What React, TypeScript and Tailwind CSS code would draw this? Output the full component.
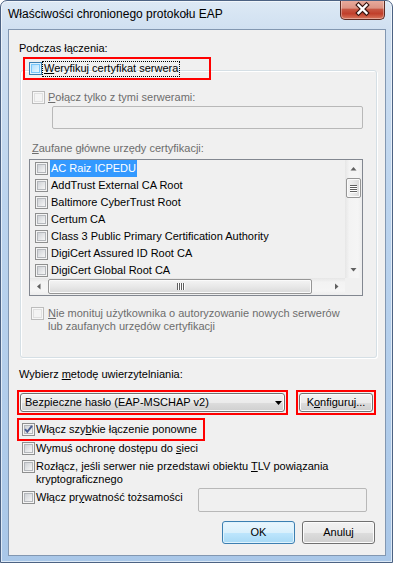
import React from 'react';

type Kind = 'normal' | 'hot' | 'disabled';

function Box({ kind = 'normal', checked = false }: { kind?: Kind; checked?: boolean }) {
  if (kind === 'disabled') {
    return (
      <span className="flex h-[13px] w-[13px] shrink-0 border border-[#bcbcbc] bg-[#f7f7f7] p-[1px]">
        <span className="h-full w-full border border-[#e0e0e0] bg-[#f4f4f4]" />
      </span>
    );
  }
  if (kind === 'hot') {
    return (
      <span className="flex h-[13px] w-[13px] shrink-0 border border-[#3c7fb1] bg-[#dff2fd] p-[1px]">
        <span className="h-full w-full border border-[#79c6f9] bg-[linear-gradient(135deg,#b1dffd,#e9f7fe)]" />
      </span>
    );
  }
  return (
    <span className="relative flex h-[13px] w-[13px] shrink-0 border border-[#8e8f8f] bg-[#f4f4f4] p-[1px]">
      <span className="h-full w-full border border-[#b4b7bb] bg-[linear-gradient(135deg,#cfd2d6,#f6f6f6)]" />
      {checked && (
        <svg className="absolute left-[-1px] top-[-1px]" width="13" height="13" viewBox="0 0 13 13">
          <path d="M3 6.2 L5.3 8.8 L10 2.8" fill="none" stroke="#4a5c8f" strokeWidth="2" />
        </svg>
      )}
    </span>
  );
}

function U({ children }: { children: React.ReactNode }) {
  return <span className="underline decoration-1 underline-offset-[1px]">{children}</span>;
}

function Arrow({ dir }: { dir: 'up' | 'down' | 'left' | 'right' }) {
  const d =
    dir === 'up'
      ? 'M0.5 4.5 L3.5 1 L6.5 4.5 Z'
      : dir === 'down'
      ? 'M0.5 1 L3.5 4.5 L6.5 1 Z'
      : dir === 'left'
      ? 'M4.5 0.5 L1 3.5 L4.5 6.5 Z'
      : 'M1 0.5 L4.5 3.5 L1 6.5 Z';
  const w = dir === 'up' || dir === 'down' ? 7 : 5;
  const h = dir === 'up' || dir === 'down' ? 5 : 7;
  return (
    <svg width={w} height={h} viewBox={`0 0 ${w} ${h}`}>
      <path d={d} fill="#606060" />
    </svg>
  );
}

function Btn({ children, def = false }: { children: React.ReactNode; def?: boolean }) {
  return (
    <div
      className={
        def
          ? 'flex h-[23px] w-[73px] items-center justify-center rounded-[3px] border border-[#3c7fb1] bg-[linear-gradient(to_bottom,#eaf6fd_0%,#d9f0fc_50%,#bee6fd_51%,#a7d9f5_100%)] shadow-[inset_0_0_0_1px_#dff3fd]'
          : 'flex h-[23px] w-[73px] items-center justify-center rounded-[3px] border border-[#707070] bg-[linear-gradient(to_bottom,#f2f2f2_0%,#ebebeb_50%,#dddddd_51%,#cfcfcf_100%)] shadow-[inset_0_0_0_1px_#fcfcfc]'
      }
    >
      {children}
    </div>
  );
}

const rows = [
  'AC Raiz ICPEDU',
  'AddTrust External CA Root',
  'Baltimore CyberTrust Root',
  'Certum CA',
  'Class 3 Public Primary Certification Authority',
  'DigiCert Assured ID Root CA',
  'DigiCert Global Root CA',
];

function Grip({ vertical }: { vertical: boolean }) {
  return (
    <div className={vertical ? 'flex flex-col gap-[1px]' : 'flex gap-[1px]'}>
      {[0, 1, 2, 3].map((i) => (
        <span
          key={i}
          className={
            vertical
              ? 'block h-[1px] w-[7px] bg-[#5f5f5f] shadow-[0_1px_0_#ffffff]'
              : 'block h-[7px] w-[1px] bg-[#5f5f5f] shadow-[1px_0_0_#ffffff]'
          }
        />
      ))}
    </div>
  );
}

function ListBox() {
  return (
    <div className="ml-[8px] mt-[4px] flex h-[137px] w-[334px] flex-col border border-[#828790] bg-[#f0f0f0]">
      <div className="flex h-[118px]">
        <div className="h-full w-[315px] overflow-hidden">
          {rows.map((t, i) => (
            <div key={t} className="flex h-[17px] items-center pl-[5px]">
              <Box />
              <span
                className={
                  i === 0
                    ? 'ml-[2px] flex h-full items-center bg-[#3399ff] px-[1px] text-white'
                    : 'ml-[2px] flex h-full items-center px-[1px]'
                }
              >
                {t}
              </span>
            </div>
          ))}
        </div>
        <div className="flex h-full w-[17px] flex-col bg-[linear-gradient(to_right,#e6e6e6,#f3f3f3_25%,#f5f5f5_75%,#ededed)]">
          <div className="flex h-[17px] items-center justify-center">
            <Arrow dir="up" />
          </div>
          <div className="ml-[1px] mt-[1px] flex h-[20px] w-[15px] items-center justify-center rounded-[2px] border border-[#969696] bg-[linear-gradient(to_right,#f4f4f4,#e8e8e8_50%,#d9d9d9)] shadow-[inset_0_0_0_1px_#fafafa]">
            <Grip vertical />
          </div>
          <div className="flex-1" />
          <div className="flex h-[17px] items-center justify-center">
            <Arrow dir="down" />
          </div>
        </div>
      </div>
      <div className="flex h-[17px]">
        <div className="flex h-full w-[315px] items-center bg-[linear-gradient(to_bottom,#e6e6e6,#f3f3f3_25%,#f5f5f5_75%,#ededed)]">
          <div className="flex h-full w-[17px] items-center justify-center">
            <Arrow dir="left" />
          </div>
          <div className="ml-[1px] flex h-[15px] w-[264px] items-center justify-center rounded-[2px] border border-[#969696] bg-[linear-gradient(to_bottom,#f4f4f4,#e8e8e8_50%,#d9d9d9)] shadow-[inset_0_0_0_1px_#fafafa]">
            <Grip vertical={false} />
          </div>
          <div className="flex-1" />
          <div className="flex h-full w-[17px] items-center justify-center">
            <Arrow dir="right" />
          </div>
        </div>
        <div className="h-full w-[17px] bg-[#f0f0f0]" />
      </div>
    </div>
  );
}

function CloseButton() {
  return (
    <div className="-mt-[1px] ml-auto mr-[7px] h-[20px] w-[45px] rounded-b-[5px] border border-t-0 border-[#5c2a22] bg-[linear-gradient(to_bottom,#e9ad9f_0%,#dc9484_42%,#c75642_50%,#c13f2b_72%,#d9775d_100%)] shadow-[inset_0_0_0_1px_rgba(255,255,255,0.35)]">
      <svg width="43" height="19" viewBox="0 0 43 19">
        <path d="M17.5 5 L25.5 13 M25.5 5 L17.5 13" stroke="#3b1712" strokeWidth="4.6" strokeLinecap="square" />
        <path d="M17.5 5 L25.5 13 M25.5 5 L17.5 13" stroke="#ffffff" strokeWidth="2.4" strokeLinecap="square" />
      </svg>
    </div>
  );
}

export default function App() {
  return (
    <div className="relative h-[563px] w-[393px] overflow-hidden rounded-t-[7px] border border-[#4c6283] bg-[linear-gradient(to_bottom,#dde9f5_0px,#d0e0f1_28px,#bcd4ee_200px,#a9c7e8_563px)] font-['Liberation_Sans',Arial,sans-serif] text-[11px] leading-[13px] text-black shadow-[inset_0_0_0_1px_rgba(255,255,255,0.6)]">
      <div className="flex h-[28px] items-start">
        <div className="pl-[7px] pt-[6px] text-[12px] leading-[15px]">Właściwości chronionego protokołu EAP</div>
        <CloseButton />
      </div>
      <div className="ml-[7px] h-[527px] w-[378px] border border-[#8297b1] bg-[#f0f0f0]">
        <div className="flex flex-col">
          <div className="ml-[10px] mt-[12px]">Podczas łączenia:</div>
          <div className="relative z-10 ml-[14px] mt-[2px] flex h-[23px] w-[188px] items-center border-2 border-[#ff0000] pl-[4px]">
            <Box kind="hot" />
            <span className="border border-dotted border-black px-[1px] pb-[1px]">
              <U>W</U>eryfikuj certyfikat serwera
            </span>
          </div>
          <div className="-mt-[10px] ml-[11px] flex h-[288px] w-[357px] flex-col rounded-[3px] border border-[#d5dfe5] shadow-[inset_1px_1px_0_#ffffff,1px_1px_0_#ffffff]">
            <div className="ml-[11px] mt-[20px] flex items-center gap-[3px] text-[#6d6d6d]">
              <Box kind="disabled" />
              <span>
                <U>P</U>ołącz tylko z tymi serwerami:
              </span>
            </div>
            <div className="ml-[31px] mt-[2px] h-[23px] w-[311px] rounded-[2px] border border-[#b8b8b8] bg-[#f0f0f0]" />
            <div className="ml-[11px] mt-[13px] text-[#6d6d6d]">
              <U>Z</U>aufane główne urzędy certyfikacji:
            </div>
            <ListBox />
            <div className="ml-[10px] mt-[11px] flex items-start gap-[4px] text-[#6d6d6d]">
              <Box kind="disabled" />
              <span>
                <U>N</U>ie monituj użytkownika o autoryzowanie nowych serwerów
                <br />
                lub zaufanych urzędów certyfikacji
              </span>
            </div>
          </div>
          <div className="ml-[10px] mt-[10px]">
            Wybierz <U>m</U>etodę uwierzytelniania:
          </div>
          <div className="ml-[8px] mt-[9px] flex gap-[8px]">
            <div className="h-[25px] w-[271px] border-2 border-[#ff0000] p-[1px]">
              <div className="flex h-full w-full items-center rounded-[3px] border border-[#707070] bg-[linear-gradient(to_bottom,#f2f2f2_0%,#ebebeb_50%,#dddddd_51%,#cfcfcf_100%)] pl-[4px] pr-[2px] shadow-[inset_0_0_0_1px_#fcfcfc]">
                <span>Bezpieczne hasło (EAP-MSCHAP v2)</span>
                <span className="ml-auto flex">
                  <svg width="7" height="4" viewBox="0 0 7 4">
                    <path d="M0 0 L7 0 L3.5 4 Z" fill="#000" />
                  </svg>
                </span>
              </div>
            </div>
            <div className="h-[25px] w-[80px] border-2 border-[#ff0000] p-[1px]">
              <div className="flex h-full w-full items-center justify-center rounded-[3px] border border-[#707070] bg-[linear-gradient(to_bottom,#f2f2f2_0%,#ebebeb_50%,#dddddd_51%,#cfcfcf_100%)] shadow-[inset_0_0_0_1px_#fcfcfc]">
                <span>
                  K<U>o</U>nfiguruj...
                </span>
              </div>
            </div>
          </div>
          <div className="ml-[8px] mt-[3px] flex h-[23px] w-[188px] items-center gap-[1px] border-2 border-[#ff0000] pl-[3px]">
            <Box checked />
            <span>
              Włącz szy<U>b</U>kie łączenie ponowne
            </span>
          </div>
          <div className="ml-[13px] mt-[1px] flex items-center gap-[1px]">
            <Box />
            <span>
              Wymuś ochronę dostępu do <U>s</U>ieci
            </span>
          </div>
          <div className="ml-[13px] mt-[5px] flex items-start gap-[1px]">
            <Box />
            <span>
              Rozłącz, jeśli serwer nie przedstawi obiektu <U>T</U>LV powiązania
              <br />
              kryptograficznego
            </span>
          </div>
          <div className="ml-[13px] mt-[2px] flex items-start">
            <div className="mt-[3px] flex w-[176px] items-center gap-[1px]">
              <Box />
              <span>
                Włącz pr<U>y</U>watność tożsamości
              </span>
            </div>
            <div className="h-[24px] w-[169px] rounded-[2px] border border-[#b8b8b8] bg-[#f0f0f0]" />
          </div>
          <div className="mr-[10px] mt-[9px] flex justify-end gap-[7px]">
            <Btn def>OK</Btn>
            <Btn>Anuluj</Btn>
          </div>
        </div>
      </div>
    </div>
  );
}
